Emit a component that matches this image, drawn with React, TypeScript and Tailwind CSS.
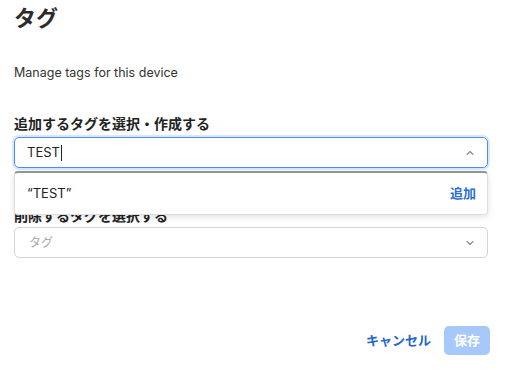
import { ChevronDown, ChevronUp } from "lucide-react";

const font = { fontFamily: "Inter, 'Noto Sans CJK JP', sans-serif" };

export default function App() {
  return (
    <div
      className="w-[506px] h-[370px] bg-white text-[#333] pl-[14px] pr-[18px] flex flex-col overflow-hidden"
      style={font}>
      <h1 className="text-[22px] font-bold leading-[30px] mt-[3px] text-[#2b2b2b]">
        タグ
      </h1>
      <p className="text-[12.5px] leading-[18px] mt-[31px] text-[#333]">
        Manage tags for this device
      </p>

      <label className="text-[14px] font-bold leading-[20px] mt-[32px] text-[#222]">
        追加するタグを選択・作成する
      </label>
      <div className="relative mt-[3px]">
        <div className="h-[31px] rounded-[5px] border border-[#4a8ef2] ring-2 ring-[#4a8ef2]/20 flex items-center pl-[12px] pr-[11px]">
          <span className="text-[13px] text-[#222] flex-1 flex items-center">
            TEST
            <span className="w-px h-[16px] bg-[#222] ml-px" />
          </span>
          <ChevronUp size={12} strokeWidth={2.25} className="text-[#8a8a8a]" />
        </div>

        <div className="absolute left-0 right-0 top-[34px] z-10 bg-white rounded-[4px] border border-[#ddd] border-t-2 border-t-[#8d959e] shadow-[0_2px_6px_rgba(0,0,0,0.12)] h-[44px] flex items-center justify-between pl-[12px] pr-[11px]">
          <span className="text-[13px] text-[#222]">“TEST”</span>
          <span className="text-[13px] font-bold text-[#2a6fd1]">追加</span>
        </div>
      </div>

      <label className="text-[14px] font-bold leading-[20px] mt-[38px] text-[#222]">
        削除するタグを選択する
      </label>
      <div className="h-[31px] mt-[1px] rounded-[5px] border border-[#d4d4d4] flex items-center pl-[14px] pr-[11px]">
        <span className="text-[12px] text-[#aaa] flex-1">タグ</span>
        <ChevronDown size={12} strokeWidth={2.25} className="text-[#8a8a8a]" />
      </div>

      <div className="flex justify-end items-center gap-[11px] mt-[68px] mr-[-2px]">
        <button
          type="button"
          className="text-[13px] font-bold text-[#2467c9] px-[2px]">
          キャンセル
        </button>
        <button
          type="button"
          className="h-[29px] px-[10px] rounded-[5px] bg-[#a6c8fa] text-white text-[13px] font-bold">
          保存
        </button>
      </div>
    </div>
  );
}
